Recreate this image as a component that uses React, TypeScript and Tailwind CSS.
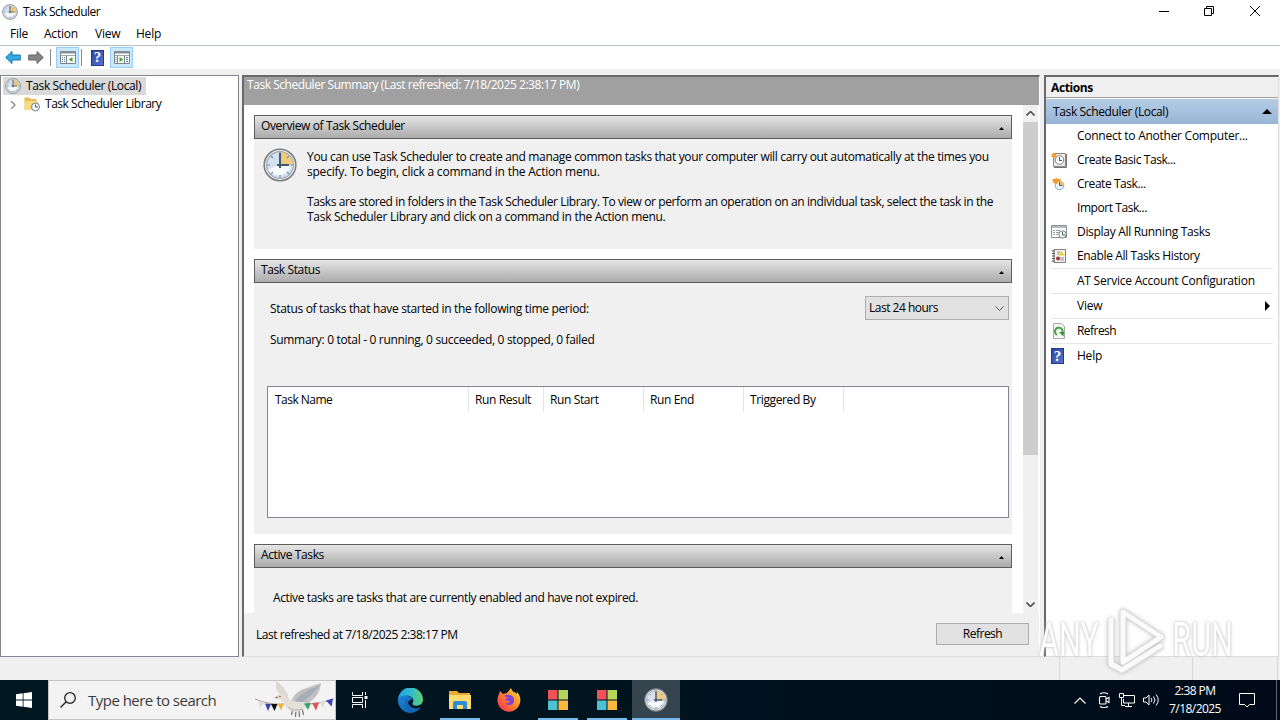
import React from 'react'

const actions = [
    { label: 'Connect to Another Computer...', icon: '', sep: false, cls: 'tracking-[-0.26px]' },
    { label: 'Create Basic Task...', icon: 'basic', sep: false, cls: 'tracking-[-0.41px]' },
    { label: 'Create Task...', icon: 'create', sep: false, cls: 'tracking-[-0.44px]' },
    { label: 'Import Task...', icon: '', sep: false, cls: 'tracking-[-0.44px]' },
    { label: 'Display All Running Tasks', icon: 'running', sep: false, cls: 'tracking-[-0.31px]' },
    { label: 'Enable All Tasks History', icon: 'history', sep: false, cls: 'tracking-[-0.38px]' },
    { label: 'AT Service Account Configuration', icon: '', sep: true, cls: 'tracking-[-0.23px]' },
    { label: 'View', icon: '', sep: true, cls: 'tracking-[-0.23px]' },
    { label: 'Refresh', icon: 'refresh', sep: true, cls: 'tracking-[-0.55px]' },
    { label: 'Help', icon: 'help', sep: true, cls: 'tracking-[-0.23px]' },
]

function Clock({ className }: { className: string }) {
    return (
        <svg className={className} viewBox="0 0 34 34">
            <circle cx="17" cy="17" r="15.800" fill="#f1f2f3" stroke="#7b7d80" strokeWidth="1.600" />
            <circle cx="17" cy="17" r="13.400" fill="#d3e2ee" stroke="#a0a8b0" strokeWidth="1.200" />
            <path d="M5 22L28 11A13 13 0 0 1 5 22Z" fill="#f7fafc" />
            <path d="M17 17V4A13 13 0 0 1 30 17Z" fill="#efcb7d" />
            <path d="M17 4v3M17 27v3M4 17h3M27 17h3M8 8l2 2M26 26l-2-2M8 26l2-2M26 8l-2 2" stroke="#8095aa" strokeWidth="1.2" />
            <path d="M17 5v15M14 17h12" stroke="#42586f" strokeWidth="2" fill="none" />
        </svg>
    )
}

function HelpIcon({ className }: { className: string }) {
    return (
        <span className={`${className} flex items-center justify-center border border-[#26388c] bg-linear-to-br from-[#2c469c] to-[#5673d4] font-['Liberation_Serif',serif] text-[15px] leading-none font-bold text-white`}>?</span>
    )
}

function ActionIcon({ name }: { name: string }) {
    if (name === 'help') return <HelpIcon className="h-[16px] w-[13px]" />
    if (name === 'basic') {
        return (
            <svg className="size-4" viewBox="0 0 16 16">
                <path d="M2.500 1.500h12v13h-12z" fill="#eeece8" stroke="#8d8983" />
                <path d="M15.500 2v13.500H3" stroke="#77736d" fill="none" />
                <circle cx="8.500" cy="8" r="4.300" fill="#fff" stroke="#77828a" />
                <path d="M8.500 5v3.500H11" stroke="#44525c" fill="none" />
                <path d="M3 0l1 2 2-.5L5 3.500l1 1.500-2 0-1 2-1-2-2 0 1-1.500L0 1.500l2 .5z" fill="#f0a02c" />
            </svg>
        )
    }
    if (name === 'create') {
        return (
            <svg className="size-4" viewBox="0 0 16 16">
                <circle cx="8.500" cy="9.500" r="4.300" fill="#e4f1f8" stroke="#85abc0" />
                <path d="M8.500 9.500V5A4.500 4.500 0 0 1 13 9.500z" fill="#f3bd62" />
                <path d="M8.500 6V9.500h3" stroke="#3d657f" fill="none" />
                <path d="M2 3l2 0 1-1 2 1 3 0-1 2-2 1-1 2-2-1-1.500 1 0-2.500-1.500-1z" fill="#f09a2b" />
            </svg>
        )
    }
    if (name === 'running') {
        return (
            <svg className="size-4" viewBox="0 0 16 16">
                <path d="M.5 1.500h15v12H.5z" fill="#fff" stroke="#8b9499" />
                <path d="M1 3h14" stroke="#98a5ab" strokeWidth="1.500" />
                <path d="M2 6.500h2M5 6.500h4M2 8.500h2M5 8.500h3M2 10.500h2M5 10.500h2" stroke="#8fa79a" />
                <circle cx="11.500" cy="10.500" r="3.700" fill="#f4f7f7" stroke="#71858b" />
                <path d="M11.500 8v3H14" stroke="#52655c" fill="none" />
            </svg>
        )
    }
    if (name === 'history') {
        return (
            <svg className="size-4" viewBox="0 0 16 16">
                <path d="M3 1.500h11.500v13H3z" fill="#f6f4e8" stroke="#818181" />
                <path d="M1 3h3M1 5.500h3M1 8h3M1 10.500h3M1 13h3" stroke="#4c4c4c" />
                <path d="M6 4h3M6 6h2M9 10h4M9 12h4" stroke="#8193b8" />
                <path d="M10.500 2.500l3 5h-6z" fill="#eed531" />
                <circle cx="7" cy="10.500" r="2" fill="#a9353c" />
            </svg>
        )
    }
    if (name === 'refresh') {
        return (
            <svg className="size-4" viewBox="0 0 16 16">
                <path d="M2.500.5h8l3 3v12h-11z" fill="#f3f8f2" stroke="#a3aaa3" />
                <path d="M6 11.800A3.800 3.800 0 1 1 11 10.500" stroke="#42a447" strokeWidth="2" fill="none" />
                <path d="M8 9l5 0-.5 4.500z" fill="#2f9038" />
            </svg>
        )
    }
    return null
}

function PaneIcon({ flip }: { flip?: boolean }) {
    return (
        <svg className="h-[15px] w-4" viewBox="0 0 16 15">
            <path d="M.5 1.500h15v12H.5z" fill="#fff" stroke="#7c8588" />
            <path d="M1 2.500h14" stroke="#829095" strokeWidth="2" />
            <path d="M1 5.500h14" stroke="#a2aaad" />
            {flip ? (
                <>
                    <path d="M3.500 5.500v8M10.500 5.500v8" stroke="#7c8588" />
                    <path d="M12 7.500h2M12 9.500h2M12 11.500h2M1.500 7.500h1M1.500 9.500h1M1.500 11.500h1" stroke="#5274a2" />
                    <path d="M5.500 7l4 2.500-4 2.500z" fill="#54a33e" />
                </>
            ) : (
                <>
                    <path d="M6.500 5.500v8" stroke="#7c8588" />
                    <path d="M2 7.500h1M4 7.500h1M2 9.500h1M4 9.500h1M2 11.500h1M4 11.500h1" stroke="#5274a2" />
                    <path d="M12.500 7l-4 2.500 4 2.500z" fill="#54a33e" />
                </>
            )}
        </svg>
    )
}

function Arrow({ back }: { back?: boolean }) {
    return (
        <svg className="h-[15px] w-4" viewBox="0 0 16 15">
            {back ? (
                <path d="M.7 7.500L7 1.500v3.500h8.300v5H7v3.500z" fill="#35a9e4" stroke="#1877ad" />
            ) : (
                <path d="M15.300 7.500L9 1.500v3.500H.7v5H9v3.500z" fill="#858585" stroke="#646464" />
            )}
        </svg>
    )
}

function Section({ title }: { title: string }) {
    return (
        <div className="flex h-6 shrink-0 items-center justify-between border border-[#5c5c5c] bg-linear-to-b from-[#e6e6e6] to-[#ababab] pr-[7px] pb-[2px] pl-[6px]">
            <span className="tracking-[-0.38px]">{title}</span>
            <svg className="mt-[4px] h-[3px] w-[5px]" viewBox="0 0 5 3"><path d="M0 3L2.500 0 5 3z" /></svg>
        </div>
    )
}

function TitleBar() {
    return (
        <div className="flex h-6 shrink-0 items-center bg-white pl-[2px]">
            <Clock className="size-4" />
            <span className="ml-[5px] tracking-[-0.5px]">Task Scheduler</span>
            <svg className="mr-[18px] mb-[2px] ml-auto h-3 w-[104px]" viewBox="0 0 104 12" fill="none" stroke="#000">
                <path d="M1 6.500h10" />
                <path d="M46.500 3.500h7v7h-7zM48.500 3.500v-2h7v7h-2" />
                <path d="M92 1l10 10M102 1L92 11" />
            </svg>
        </div>
    )
}

function Toolbar() {
    return (
        <div className="flex h-6 shrink-0 items-center border-t border-[#b5bdc0] bg-white pl-[5px]">
            <Arrow back />
            <span className="ml-[7px] flex"><Arrow /></span>
            <span className="ml-[6px] h-[17px] w-px bg-[#8b8b8b]" />
            <span className="ml-[5px] flex h-[21px] w-[23px] items-center justify-center border border-[#98cdf5] bg-[#cbe7fc]"><PaneIcon /></span>
            <span className="ml-[2px] h-[17px] w-px bg-[#8b8b8b]" />
            <HelpIcon className="ml-[9px] h-4 w-[13px]" />
            <span className="ml-[6px] flex h-[21px] w-[23px] items-center justify-center border border-[#98cdf5] bg-[#cbe7fc]"><PaneIcon flip /></span>
        </div>
    )
}

function Tree() {
    return (
        <div className="w-[239px] border border-[#82858c] bg-white pt-px">
            <div className="ml-[2px] flex h-[18px] w-[143px] items-center bg-[#d9d9d9] pl-[2px]">
                <Clock className="size-4" />
                <span className="ml-[5px] tracking-[-0.37px]">Task Scheduler (Local)</span>
            </div>
            <div className="flex h-[18px] items-center pl-[9px]">
                <svg className="mt-[2px] h-2 w-[6px]" viewBox="0 0 6 8" fill="none" stroke="#8b8b8b" strokeWidth="1.3"><path d="M1 0l4 4-4 4" /></svg>
                <svg className="ml-[8px] size-4" viewBox="0 0 16 16">
                    <path d="M.5 3V1.500h5l1 1.500h6v11H.5z" fill="#e9bd50" />
                    <path d="M1 5h13v9H1z" fill="#f7db83" />
                    <circle cx="11.500" cy="11" r="4" fill="#f4f7f9" stroke="#71808b" />
                    <path d="M11.500 8.500V11H14" stroke="#3c6276" fill="none" />
                </svg>
                <span className="ml-[5px] tracking-[-0.46px]">Task Scheduler Library</span>
            </div>
        </div>
    )
}

function Summary() {
    return (
        <div className="ml-[3px] flex w-[798px] flex-col border-t-2 border-r border-b border-l-2 border-t-[#696969] border-r-white border-b-[#dedede] border-l-[#696969] bg-[#f0f0f0]">
            <div className="h-[28px] shrink-0 bg-[#a0a0a0] pl-[3px] leading-4 tracking-[-0.45px] text-white">Task Scheduler Summary (Last refreshed: 7/18/2025 2:38:17 PM)</div>
            <div className="flex h-[508px] shrink-0 overflow-hidden bg-white">
                <div className="ml-[10px] flex w-[758px] flex-col pt-[10px]">
                    <Section title="Overview of Task Scheduler" />
                    <div className="flex h-[110px] shrink-0 bg-[#f0f0f0] pt-[10px] pl-[9px] leading-[15px]">
                        <Clock className="-mt-px size-[34px] shrink-0" />
                        <div className="ml-[10px] whitespace-nowrap">
                            <p className="tracking-[-0.33px]">You can use Task Scheduler to create and manage common tasks that your computer will carry out automatically at the times you</p>
                            <p className="tracking-[-0.22px]">specify. To begin, click a command in the Action menu.</p>
                            <p className="mt-[15px] tracking-[-0.39px]">Tasks are stored in folders in the Task Scheduler Library. To view or perform an operation on an individual task, select the task in the</p>
                            <p className="tracking-[-0.29px]">Task Scheduler Library and click on a command in the Action menu.</p>
                        </div>
                    </div>
                    <div className="h-[10px] shrink-0" />
                    <Section title="Task Status" />
                    <div className="flex h-[251px] shrink-0 flex-col bg-[#f0f0f0] pt-[13px] pr-[3px] pl-[13px]">
                        <div className="flex h-6 items-center justify-between pl-[3px]">
                            <span className="mt-[2px] tracking-[-0.33px]">Status of tasks that have started in the following time period:</span>
                            <div className="flex h-6 w-[144px] items-center justify-between border border-[#adadad] bg-[#e1e1e1] pr-1 pl-[3px]">
                                <span className="tracking-[-0.5px]">Last 24 hours</span>
                                <svg className="h-[5px] w-[9px]" viewBox="0 0 9 5" fill="none" stroke="#555"><path d="M.5.5l4 4 4-4" /></svg>
                            </div>
                        </div>
                        <p className="mt-[11px] pl-[3px] leading-[18px] tracking-[-0.32px]">Summary: 0 total - 0 running, 0 succeeded, 0 stopped, 0 failed</p>
                        <div className="mt-[37px] h-[132px] border border-[#828790] bg-white">
                            <div className="flex h-[25px] leading-[26px] tracking-[-0.38px]">
                                <span className="w-[201px] border-r border-[#e5e5e5] pl-[7px] tracking-[-0.52px]">Task Name</span>
                                <span className="w-[75px] border-r border-[#e5e5e5] pl-[6px]">Run Result</span>
                                <span className="w-[100px] border-r border-[#e5e5e5] pl-[6px]">Run Start</span>
                                <span className="w-[100px] border-r border-[#e5e5e5] pl-[6px]">Run End</span>
                                <span className="w-[100px] border-r border-[#e5e5e5] pl-[6px]">Triggered By</span>
                            </div>
                        </div>
                    </div>
                    <div className="h-[10px] shrink-0" />
                    <Section title="Active Tasks" />
                    <div className="h-[45px] shrink-0 bg-[#f0f0f0] pt-[22px] pl-[19px] tracking-[-0.385px]">Active tasks are tasks that are currently enabled and have not expired.</div>
                </div>
                <div className="ml-[11px] flex w-[15px] flex-col items-center bg-[#f0f0f0]">
                    <svg className="my-[6px] h-[5px] w-[9px] shrink-0" viewBox="0 0 9 5" fill="none" stroke="#505050" strokeWidth="1.600"><path d="M.5 4.500l4-4 4 4" /></svg>
                    <div className="h-[333px] w-full bg-[#cdcdcd]" />
                    <svg className="mt-auto mb-[6px] h-[5px] w-[9px]" viewBox="0 0 9 5" fill="none" stroke="#505050" strokeWidth="1.600"><path d="M.5.5l4 4 4-4" /></svg>
                </div>
            </div>
            <div className="flex items-center justify-between pt-[10px] pr-[10px] pl-[12px]">
                <span className="mt-[2px] tracking-[-0.47px]">Last refreshed at 7/18/2025 2:38:17 PM</span>
                <button className="h-[22px] w-[93px] border border-[#adadad] bg-[#e1e1e1] tracking-[-0.5px]">Refresh</button>
            </div>
        </div>
    )
}

function ActionsPane() {
    return (
        <div className="ml-[4px] w-[235px] border-t-2 border-r border-b border-l-2 border-t-[#696969] border-r-[#dedede] border-b-[#dedede] border-l-[#696969] bg-white">
            <div className="h-[21px] border-b border-[#a0a0a0] bg-[#f0f0f0] pl-[5px] leading-[21px] font-bold tracking-[-0.4px]">Actions</div>
            <div className="mt-px flex h-[25px] items-center justify-between bg-linear-to-b from-[#b5cce5] to-[#98b5d6] pr-[6px] pl-[7px]">
                <span className="tracking-[-0.37px]">Task Scheduler (Local)</span>
                <svg className="h-[5px] w-[10px]" viewBox="0 0 10 5"><path d="M0 5l5-5 5 5z" /></svg>
            </div>
            {actions.map((a) => (
                <div key={a.label} className={a.sep ? 'mr-[5px] ml-[5px] border-t border-[#e6e6e6]' : 'mr-[5px] ml-[5px]'}>
                    <div className="flex h-6 items-center">
                        <span className="flex w-[26px]"><ActionIcon name={a.icon} /></span>
                        <span className={a.cls}>{a.label}</span>
                        {a.label === 'View' && <svg className="mr-[3px] ml-auto h-[10px] w-[5px]" viewBox="0 0 5 10"><path d="M0 0l5 5-5 5z" /></svg>}
                    </div>
                </div>
            ))}
        </div>
    )
}

function Dove() {
    return (
        <svg className="ml-auto h-[38px] w-[80px] shrink-0" viewBox="0 0 80 38">
            <path d="M0 18Q14 24 30 23M48 23Q66 23 79 18" stroke="#9b9084" strokeWidth=".8" fill="none" />
            <path d="M3 20l6 2-4 5z" fill="#dcdcdc" />
            <path d="M10 22.500l6 .5-3 7z" fill="#3743a8" />
            <path d="M16 23h6.500l-3 7z" fill="#111" />
            <path d="M22.500 23l6-.5-2 7z" fill="#efb13a" />
            <path d="M38 27l-1.500 7M41 28l-.5 8M44 28l.5 8M47 27l1.500 7" stroke="#77706f" strokeWidth="1.200" />
            <path d="M21 0Q29 5 33 14L34 20 28 17Q19 9 21 0Z" fill="#dcd9d4" />
            <path d="M36 20Q41 9 52 7Q60 4 66 2Q65 14 55 21Q51 25 44 25Z" fill="#c3c0c1" />
            <path d="M40 20Q46 11 65 4Q58 14 46 22Z" fill="#a5afb8" />
            <path d="M21 17Q22 13 26 13.500Q30 14 32 18Q37 19 42 21Q49 20 53 24Q49 30 41 31Q32 30 28 22Q26 18 21 17Z" fill="#e3dfd9" />
            <path d="M33 26Q38 31 48 28" stroke="#b7afa9" fill="none" />
            <path d="M19.500 16.500l3-1v2z" fill="#8d5744" />
            <circle cx="25" cy="15.500" r=".8" fill="#c03528" />
            <path d="M49 22.500l7-.5-3 7z" fill="#35a46a" />
            <path d="M57 22l7-.5-3 8z" fill="#e65057" />
            <path d="M65 21.500l5-1.500-2 7z" fill="#dcdcdc" />
            <path d="M71 19.500l7-2-1.500 8z" fill="#3546b4" />
        </svg>
    )
}

function Tiles() {
    return (
        <svg className="size-5" viewBox="0 0 20 20">
            <path d="M0 0h9.500v9.500H0z" fill="#f25157" />
            <path d="M10.500 0H20v9.500h-9.500z" fill="#b7d65c" />
            <path d="M0 10.500h9.500V20H0z" fill="#4bc1d2" />
            <path d="M10.500 10.500H20V20h-9.500z" fill="#fdb93d" />
        </svg>
    )
}

function Taskbar() {
    return (
        <div className="flex h-10 shrink-0 bg-linear-to-r from-[#001720] via-[#001420] to-[#000a18] text-white">
            <div className="flex w-12 items-center justify-center">
                <svg className="size-4" viewBox="0 0 16 16" fill="#fff"><path d="M0 2.200L6.700 1.300v6.300H0zM7.500 1.200L16 0v7.600H7.500zM0 8.400h6.700v6.300L0 13.800zM7.500 8.400H16V16l-8.500-1.200z" /></svg>
            </div>
            <div className="flex w-[288px] items-center border border-[#c4c4c4] bg-[#f3f3f3] pl-[11px] text-[#3b3b3b]">
                <svg className="size-4 shrink-0" viewBox="0 0 16 16" fill="none" stroke="#222" strokeWidth="1.300"><circle cx="10" cy="6" r="5.300" /><path d="M6.200 9.800L.5 15.500" /></svg>
                <span className="ml-[12px] text-[15px] whitespace-nowrap tracking-[-0.52px]">Type here to search</span>
                <Dove />
            </div>
            <div className="flex w-[48px] items-center justify-center">
                <svg className="size-4" viewBox="0 0 16 16" fill="none" stroke="#fff"><path d="M.5 0v3.500h10V0M.5 16v-3.500h10V16M.5 5.500h10v5H.5zM13.500 0v3M13.500 8v8" /><path d="M12.500 4h3v3h-3z" fill="#fff" stroke="none" /></svg>
            </div>
            <div className="ml-[2px] flex w-[49px] items-center justify-center">
                <svg className="size-[25px]" viewBox="0 0 24 24">
                    <defs>
                        <linearGradient id="edgeTop" x1="0" x2="1"><stop stopColor="#279fe5" /><stop offset=".5" stopColor="#2ebbd2" /><stop offset="1" stopColor="#60d36c" /></linearGradient>
                        <linearGradient id="edgeLow" x1="0" x2="1" y2="1"><stop stopColor="#1a86d6" /><stop offset="1" stopColor="#1258a6" /></linearGradient>
                    </defs>
                    <path d="M0 12A12 12 0 0 1 24 11C24 15 21 17 17.500 17C14.500 17 13 15.500 14.300 14C16 11 13 7.500 9 7.500C4 7.500 1 10 0 12Z" fill="url(#edgeTop)" />
                    <path d="M0 12C1 8.500 5 6.500 9 7.500C12 8 14 10 14 11C9 10.500 8 17 13 19.500C16 21 20 20 22 18C19 22 16 24 12 24A12 12 0 0 1 0 12Z" fill="url(#edgeLow)" />
                    <path d="M9 10C5 13 7 21 13 23.500C17 23.500 20 21 22 18C18 21 9 20 9 10Z" fill="#1167b7" />
                </svg>
            </div>
            <div className="flex w-[49px] justify-center">
                <div className="flex w-10 items-center justify-center border-b-2 border-[#76b9ed] pt-[2px]">
                    <svg className="h-[19px] w-[22px]" viewBox="0 0 22 19">
                        <path d="M0 0h8l2 2h11v15H0z" fill="#eca92f" />
                        <path d="M0 4h22v14H0z" fill="#fddb73" />
                        <path d="M4 18v-6q0-2 2-2h10q2 0 2 2v6h-4v-4H8v4z" fill="#2f8bd3" />
                    </svg>
                </div>
            </div>
            <div className="flex w-[49px] items-center justify-center">
                <svg className="size-[24px]" viewBox="0 0 24 24">
                    <defs><linearGradient id="fox" x1="1" y1="0" x2="0" y2="1"><stop stopColor="#ffe844" /><stop offset=".45" stopColor="#ff8a26" /><stop offset="1" stopColor="#f5245f" /></linearGradient></defs>
                    <path d="M3 3l3 3 4-1 4-5c1 4 4 4 6 6 0-1 0-2-1-3 4 3 5 8 4 12A11.500 11.500 0 0 1 .5 14C0 9 2 7 3 3z" fill="url(#fox)" />
                    <path d="M7 8c2-2 9-2 10 3 1 6-6 8-9 4 3 1 5-1 5-2-2 0-4 0-5-2l3-1z" fill="#8441d8" />
                </svg>
            </div>
            <div className="flex w-[49px] justify-center"><div className="flex w-10 items-center justify-center border-b-2 border-[#76b9ed] pt-[2px]"><Tiles /></div></div>
            <div className="flex w-[49px] justify-center"><div className="flex w-10 items-center justify-center border-b-2 border-[#76b9ed] pt-[2px]"><Tiles /></div></div>
            <div className="ml-[1px] flex w-12 items-center justify-center border-b-2 border-[#76b9ed] bg-[#35454e] pt-[2px]"><Clock className="size-6" /></div>
            <div className="ml-auto flex items-center">
                <svg className="h-[7px] w-3" viewBox="0 0 12 7" fill="none" stroke="#fff" strokeWidth="1.200"><path d="M.5 6.500L6 1l5.500 5.500" /></svg>
                <svg className="ml-[12px] h-4 w-3" viewBox="0 0 12 16" fill="none" stroke="#fff" strokeWidth="1.100"><rect x="1.500" y="4.500" width="6.500" height="7.500" rx="1" /><path d="M8 7l3-1.500v5L8 9M2 2Q6-.5 10 2M2 14.500Q6 17 10 14.500" /></svg>
                <svg className="ml-[9px] h-[14px] w-4" viewBox="0 0 16 14" fill="none" stroke="#fff"><path d="M5 2.500h10.500v7.500H4.500V6M9.500 10v3M6 13.500h7M.5.500h4v4h-4zM2.500 5v7.500H6" /></svg>
                <svg className="ml-2 h-[14px] w-4" viewBox="0 0 16 14" fill="none" stroke="#fff"><path d="M.5 5v4H3l3 3V2L3 5zM8 5q2 2 0 4M10.500 3.500q3 3.500 0 7M13 1.500q4.500 5.500 0 11" /></svg>
                <div className="ml-[9px] w-[54px] text-center leading-[18px] tracking-[-0.55px]"><p>2:38 PM</p><p>7/18/2025</p></div>
                <svg className="ml-[17px] size-4" viewBox="0 0 16 16" fill="none" stroke="#fff"><path d="M.5 1.500h15v11h-5L8 15l-2.500-2.500h-5z" /></svg>
                <span className="mr-[3px] ml-[21px] h-10 w-px bg-[#5b626b]" />
            </div>
        </div>
    )
}

function Watermark() {
    return (
        <div className="absolute top-[606px] left-[1039px] flex h-[68px] w-[194px] items-center justify-between font-['Roboto',sans-serif] text-[48px] text-white [text-shadow:0_0_2px_#bbb,0_0_5px_#ccc]">
            <span className="w-[60px] origin-left scale-x-[0.64]">ANY</span>
            <span className="flex w-[62px] origin-right scale-x-[0.64] justify-end">RUN</span>
            <svg className="absolute left-[68px] h-[68px] w-[60px] drop-shadow-[0_0_2px_#bbb]" viewBox="0 0 60 68" fill="none" strokeLinejoin="round">
                <path d="M16 6L54 31 16 56zM4 12v46l11 6 40-25" stroke="#d9d9d9" strokeWidth="6.500" />
                <path d="M16 6L54 31 16 56zM4 12v46l11 6 40-25" stroke="#fafafa" strokeWidth="5" />
            </svg>
        </div>
    )
}

function App(): React.ReactElement {
    return (
        <div className="relative flex h-[720px] w-[1280px] flex-col overflow-hidden bg-[#f0f0f0] font-['Open_Sans','Noto_Sans',sans-serif] text-[12px] leading-4 text-black">
            <TitleBar />
            <div className="flex h-[21px] shrink-0 items-center bg-white pb-px pl-[10px] tracking-[-0.23px]">
                <span className="w-[34px]">File</span>
                <span className="w-[51px]">Action</span>
                <span className="w-[41px]">View</span>
                <span>Help</span>
            </div>
            <Toolbar />
            <div className="mt-[6px] flex h-[582px] shrink-0">
                <Tree />
                <Summary />
                <ActionsPane />
            </div>
            <div className="flex h-[23px] shrink-0">
                <div className="w-[1060px] border-r border-[#d7d7d7]" />
                <div className="w-[133px] border-r border-[#d7d7d7]" />
                <div className="w-[85px] border-r border-[#d7d7d7]" />
            </div>
            <Taskbar />
            <Watermark />
        </div>
    )
}

export default App
